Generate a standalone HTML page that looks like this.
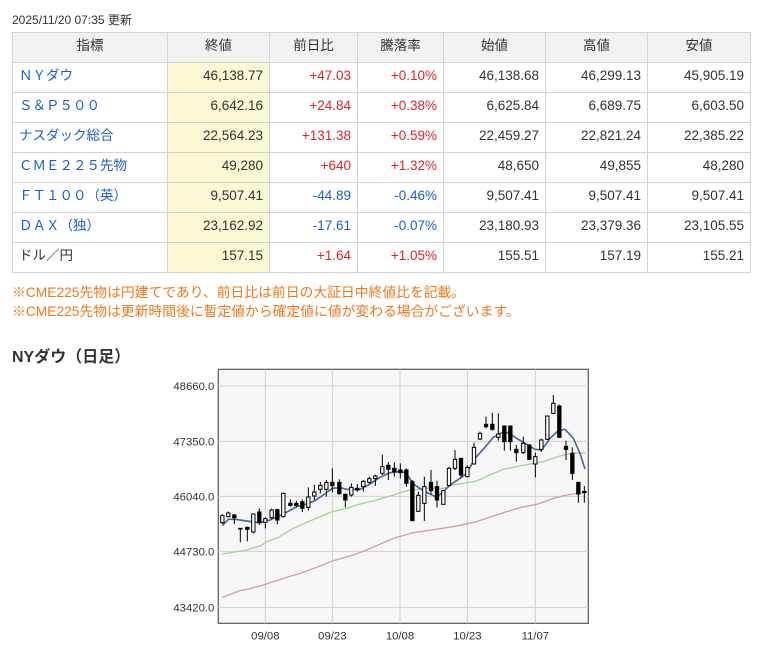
<!DOCTYPE html>
<html><head><meta charset="utf-8">
<style>
*{margin:0;padding:0;box-sizing:border-box}
body{width:763px;height:658px;background:#fff;font-family:"Liberation Sans","Noto Sans CJK JP",sans-serif;color:#333;position:relative;overflow:hidden}
.date{position:absolute;left:12px;top:11px;font-size:12px;color:#333}
table{position:absolute;left:12px;top:32px;border-collapse:collapse;font-size:13.5px}
td,th{border:1px solid #d4d4d4;height:30px;padding:0 6px 3px;line-height:16px}
th{background:#f2f2f2;font-weight:normal;text-align:center;color:#333}
td{text-align:right;color:#333}
td.n{text-align:left;color:#1a5fc9}
td.c{background:#fbf8d4}
.p{color:#e0242c}.m{color:#1a5fc9}
.note{position:absolute;left:12px;font-size:13.8px;color:#ec7a1c}
h2{position:absolute;left:12px;top:343px;font-size:16px;font-weight:bold;color:#333}
svg{position:absolute;left:160px;top:360px}
</style></head><body>
<div class="date">2025/11/20 07:35 更新</div>
<table>
<colgroup><col style="width:155px"><col style="width:102px"><col style="width:88px"><col style="width:86px"><col style="width:102px"><col style="width:102px"><col style="width:103px"></colgroup>
<tr><th>指標</th><th>終値</th><th>前日比</th><th>騰落率</th><th>始値</th><th>高値</th><th>安値</th></tr>
<tr><td class="n">ＮＹダウ</td><td class="c">46,138.77</td><td class="p">+47.03</td><td class="p">+0.10%</td><td>46,138.68</td><td>46,299.13</td><td>45,905.19</td></tr>
<tr><td class="n">Ｓ＆Ｐ５００</td><td class="c">6,642.16</td><td class="p">+24.84</td><td class="p">+0.38%</td><td>6,625.84</td><td>6,689.75</td><td>6,603.50</td></tr>
<tr><td class="n">ナスダック総合</td><td class="c">22,564.23</td><td class="p">+131.38</td><td class="p">+0.59%</td><td>22,459.27</td><td>22,821.24</td><td>22,385.22</td></tr>
<tr><td class="n">ＣＭＥ２２５先物</td><td class="c">49,280</td><td class="p">+640</td><td class="p">+1.32%</td><td>48,650</td><td>49,855</td><td>48,280</td></tr>
<tr><td class="n">ＦＴ１００（英）</td><td class="c">9,507.41</td><td class="m">-44.89</td><td class="m">-0.46%</td><td>9,507.41</td><td>9,507.41</td><td>9,507.41</td></tr>
<tr><td class="n">ＤＡＸ（独）</td><td class="c">23,162.92</td><td class="m">-17.61</td><td class="m">-0.07%</td><td>23,180.93</td><td>23,379.36</td><td>23,105.55</td></tr>
<tr><td class="n" style="color:#333">ドル／円</td><td class="c">157.15</td><td class="p">+1.64</td><td class="p">+1.05%</td><td>155.51</td><td>157.19</td><td>155.21</td></tr>
</table>
<div class="note" style="top:281px">※CME225先物は円建てであり、前日比は前日の大証日中終値比を記載。</div>
<div class="note" style="top:300px">※CME225先物は更新時間後に暫定値から確定値に値が変わる場合がございます。</div>
<h2>NYダウ（日足）</h2>
<svg width="440" height="290" viewBox="0 0 1320 870">
<rect x="175" y="28" width="1110" height="762" fill="#f7f7f7" stroke="#666" stroke-width="4"/>
<g stroke="#d0d0d0" stroke-width="3">
<line x1="175" y1="78" x2="1285" y2="78"/><line x1="175" y1="244" x2="1285" y2="244"/><line x1="175" y1="409" x2="1285" y2="409"/><line x1="175" y1="574" x2="1285" y2="574"/><line x1="175" y1="742" x2="1285" y2="742"/>
<line x1="316" y1="28" x2="316" y2="790"/><line x1="517" y1="28" x2="517" y2="790"/><line x1="720" y1="28" x2="720" y2="790"/><line x1="922" y1="28" x2="922" y2="790"/><line x1="1126" y1="28" x2="1126" y2="790"/>
</g>
<g font-family="Liberation Sans,sans-serif" font-size="34" fill="#333" text-anchor="end">
<text x="163" y="90">48660.0</text><text x="163" y="256">47350.0</text><text x="163" y="421">46040.0</text><text x="163" y="586">44730.0</text><text x="163" y="754">43420.0</text>
</g>
<g font-family="Liberation Sans,sans-serif" font-size="34" fill="#333" text-anchor="middle">
<text x="316" y="838">09/08</text><text x="517" y="838">09/23</text><text x="720" y="838">10/08</text><text x="922" y="838">10/23</text><text x="1126" y="838">11/07</text>
</g>
<g fill="none" stroke-width="4" stroke-linejoin="round">
<polyline stroke="#d4a09c" points="187,712 240,692 270,686 310,675 370,655 420,640 470,622 517,603 580,585 620,570 700,535 760,518 800,512 880,500 950,485 1000,468 1040,455 1080,443 1130,433 1180,415 1220,405 1275,397"/>
<polyline stroke="#a6d19c" points="187,582 260,570 300,558 320,545 355,532 400,505 440,487 480,470 517,455 560,445 600,432 650,420 700,405 740,392 800,385 850,385 880,375 950,363 1000,340 1030,328 1070,320 1110,312 1150,305 1200,288 1240,278 1275,280"/>
<polyline stroke="#4a6a9c" stroke-width="5" points="187,497 205,478 225,478 260,483 300,488 330,480 370,462 410,440 440,432 465,422 490,405 517,385 540,383 560,388 600,388 625,375 660,352 690,338 720,335 738,338 760,372 790,392 830,412 850,395 870,375 900,355 920,340 945,295 975,262 1000,232 1025,218 1045,218 1070,235 1100,253 1125,268 1145,270 1170,235 1195,212 1215,208 1240,235 1260,280 1275,327"/>
</g>
<g stroke="#000" stroke-width="3">
<line x1="187" y1="462" x2="187" y2="492"/><rect x="182" y="467" width="10" height="21" fill="#fff"/>
<line x1="205" y1="455" x2="205" y2="472"/><rect x="200" y="459" width="10" height="11" fill="#fff"/>
<line x1="223" y1="462" x2="223" y2="492"/><rect x="218" y="465" width="10" height="8" fill="#000"/>
<line x1="241" y1="505" x2="241" y2="547"/><rect x="236" y="505" width="10" height="2" fill="#000"/>
<line x1="262" y1="500" x2="262" y2="544"/><rect x="257" y="502" width="10" height="6" fill="#000"/>
<line x1="280" y1="460" x2="280" y2="520"/><rect x="275" y="462" width="10" height="54" fill="#fff"/>
<line x1="298" y1="445" x2="298" y2="495"/><rect x="293" y="456" width="10" height="32" fill="#000"/>
<line x1="316" y1="472" x2="316" y2="505"/><rect x="311" y="476" width="10" height="11" fill="#fff"/>
<line x1="335" y1="446" x2="335" y2="478"/><rect x="330" y="450" width="10" height="23" fill="#fff"/>
<line x1="352" y1="446" x2="352" y2="493"/><rect x="347" y="449" width="10" height="31" fill="#000"/>
<line x1="370" y1="398" x2="370" y2="472"/><rect x="365" y="400" width="10" height="70" fill="#fff"/>
<line x1="391" y1="418" x2="391" y2="440"/><rect x="386" y="430" width="10" height="6" fill="#000"/>
<line x1="409" y1="422" x2="409" y2="442"/><rect x="404" y="430" width="10" height="6" fill="#000"/>
<line x1="427" y1="418" x2="427" y2="456"/><rect x="422" y="425" width="10" height="20" fill="#000"/>
<line x1="445" y1="382" x2="445" y2="452"/><rect x="440" y="411" width="10" height="31" fill="#fff"/>
<line x1="463" y1="374" x2="463" y2="420"/><rect x="458" y="396" width="10" height="12" fill="#fff"/>
<line x1="481" y1="366" x2="481" y2="400"/><rect x="476" y="376" width="10" height="12" fill="#fff"/>
<line x1="499" y1="360" x2="499" y2="410"/><rect x="494" y="367" width="10" height="21" fill="#fff"/>
<line x1="517" y1="325" x2="517" y2="397"/><rect x="512" y="367" width="10" height="10" fill="#000"/>
<line x1="538" y1="358" x2="538" y2="404"/><rect x="533" y="367" width="10" height="34" fill="#000"/>
<line x1="556" y1="400" x2="556" y2="442"/><rect x="551" y="403" width="10" height="17" fill="#000"/>
<line x1="574" y1="370" x2="574" y2="410"/><rect x="569" y="382" width="10" height="23" fill="#fff"/>
<line x1="592" y1="372" x2="592" y2="395"/><rect x="587" y="385" width="10" height="5" fill="#000"/>
<line x1="610" y1="360" x2="610" y2="395"/><rect x="605" y="364" width="10" height="16" fill="#fff"/>
<line x1="628" y1="350" x2="628" y2="372"/><rect x="623" y="356" width="10" height="11" fill="#fff"/>
<line x1="646" y1="344" x2="646" y2="378"/><rect x="641" y="348" width="10" height="8" fill="#fff"/>
<line x1="667" y1="284" x2="667" y2="345"/><rect x="662" y="320" width="10" height="20" fill="#fff"/>
<line x1="685" y1="306" x2="685" y2="360"/><rect x="680" y="316" width="10" height="12" fill="#000"/>
<line x1="703" y1="307" x2="703" y2="350"/><rect x="698" y="325" width="10" height="10" fill="#000"/>
<line x1="721" y1="310" x2="721" y2="355"/><rect x="716" y="330" width="10" height="8" fill="#000"/>
<line x1="739" y1="325" x2="739" y2="380"/><rect x="734" y="330" width="10" height="40" fill="#000"/>
<line x1="757" y1="360" x2="757" y2="482"/><rect x="752" y="365" width="10" height="117" fill="#000"/>
<line x1="775" y1="395" x2="775" y2="455"/><rect x="770" y="406" width="10" height="48" fill="#fff"/>
<line x1="793" y1="350" x2="793" y2="483"/><rect x="788" y="380" width="10" height="50" fill="#fff"/>
<line x1="813" y1="330" x2="813" y2="403"/><rect x="808" y="367" width="10" height="25" fill="#000"/>
<line x1="831" y1="362" x2="831" y2="442"/><rect x="826" y="380" width="10" height="40" fill="#000"/>
<line x1="850" y1="390" x2="850" y2="433"/><rect x="845" y="392" width="10" height="41" fill="#fff"/>
<line x1="867" y1="320" x2="867" y2="380"/><rect x="862" y="325" width="10" height="51" fill="#fff"/>
<line x1="885" y1="270" x2="885" y2="330"/><rect x="880" y="298" width="10" height="27" fill="#fff"/>
<line x1="903" y1="295" x2="903" y2="355"/><rect x="898" y="295" width="10" height="50" fill="#000"/>
<line x1="922" y1="316" x2="922" y2="352"/><rect x="917" y="322" width="10" height="28" fill="#fff"/>
<line x1="942" y1="248" x2="942" y2="312"/><rect x="937" y="262" width="10" height="50" fill="#fff"/>
<line x1="960" y1="215" x2="960" y2="240"/><rect x="955" y="220" width="10" height="17" fill="#fff"/>
<line x1="978" y1="170" x2="978" y2="205"/><rect x="973" y="193" width="10" height="7" fill="#000"/>
<line x1="997" y1="158" x2="997" y2="212"/><rect x="992" y="193" width="10" height="15" fill="#000"/>
<line x1="1015" y1="160" x2="1015" y2="242"/><rect x="1010" y="222" width="10" height="10" fill="#fff"/>
<line x1="1033" y1="198" x2="1033" y2="272"/><rect x="1028" y="198" width="10" height="47" fill="#000"/>
<line x1="1051" y1="198" x2="1051" y2="272"/><rect x="1046" y="198" width="10" height="47" fill="#000"/>
<line x1="1069" y1="255" x2="1069" y2="305"/><rect x="1064" y="268" width="10" height="10" fill="#000"/>
<line x1="1090" y1="230" x2="1090" y2="282"/><rect x="1085" y="250" width="10" height="28" fill="#fff"/>
<line x1="1108" y1="252" x2="1108" y2="300"/><rect x="1103" y="255" width="10" height="43" fill="#000"/>
<line x1="1126" y1="278" x2="1126" y2="352"/><rect x="1121" y="290" width="10" height="22" fill="#fff"/>
<line x1="1144" y1="236" x2="1144" y2="276"/><rect x="1139" y="240" width="10" height="28" fill="#fff"/>
<line x1="1162" y1="168" x2="1162" y2="240"/><rect x="1157" y="168" width="10" height="70" fill="#fff"/>
<line x1="1180" y1="105" x2="1180" y2="162"/><rect x="1175" y="130" width="10" height="30" fill="#fff"/>
<line x1="1198" y1="134" x2="1198" y2="234"/><rect x="1193" y="138" width="10" height="94" fill="#000"/>
<line x1="1218" y1="242" x2="1218" y2="300"/><rect x="1213" y="259" width="10" height="9" fill="#000"/>
<line x1="1237" y1="262" x2="1237" y2="360"/><rect x="1232" y="280" width="10" height="60" fill="#000"/>
<line x1="1255" y1="367" x2="1255" y2="428"/><rect x="1250" y="367" width="10" height="35" fill="#000"/>
<line x1="1273" y1="378" x2="1273" y2="428"/><rect x="1268" y="394" width="10" height="4" fill="#000"/>
</g>
</svg>
</body></html>
